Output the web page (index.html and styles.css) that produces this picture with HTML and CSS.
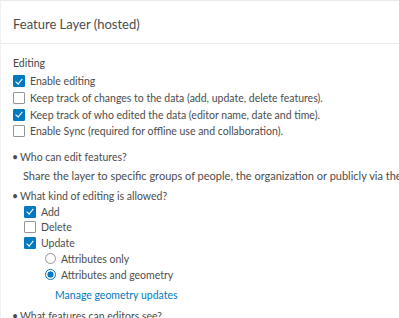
FILE: index.html
```html
<!DOCTYPE html>
<html lang="en">
<head>
    <meta charset="UTF-8">
    <meta name="viewport" content="width=device-width, initial-scale=1.0">
    <title>Feature Layer (hosted)</title>
    <link rel="stylesheet" href="styles.css">
</head>
<body>
    <div class="panel">
        <header class="panel-header">Feature Layer (hosted)</header>

        <section class="panel-body">
            <div class="group-title">Editing</div>
            <label class="check-row"><span class="box checked"></span>Enable editing</label>
            <label class="check-row"><span class="box"></span>Keep track of changes to the data (add, update, delete features).</label>
            <label class="check-row"><span class="box checked"></span>Keep track of who edited the data (editor name, date and time).</label>
            <label class="check-row"><span class="box"></span>Enable Sync (required for offline use and collaboration).</label>

            <div class="question first">Who can edit features?</div>
            <div class="note">Share the layer to specific groups of people, the organization or publicly via the Share button.</div>

            <div class="question">What kind of editing is allowed?</div>
            <div class="options">
                <label class="check-row small"><span class="box checked"></span>Add</label>
                <label class="check-row small"><span class="box"></span>Delete</label>
                <label class="check-row small"><span class="box checked"></span>Update</label>
                <div class="sub-options">
                    <label class="check-row small"><span class="radio"></span>Attributes only</label>
                    <label class="check-row small"><span class="radio selected"></span>Attributes and geometry</label>
                    <a class="link" href="#">Manage geometry updates</a>
                </div>
            </div>

            <div class="question last">What features can editors see?</div>
        </section>
    </div>
</body>
</html>
```

FILE: styles.css
```css
body {
    margin: 0;
    padding: 0;
    background-color: #fff;
    color: #4c4c4c;
    font-family: Lato, "Open Sans", sans-serif;
    overflow: hidden;
}

.panel {
    border-top: 1px solid #eaeaea;
    border-left: 1px solid #f0f0f0;
    height: 317px;
    overflow: hidden;
}

.panel-header {
    height: 39px;
    line-height: 40px;
    padding: 3px 0 0 12px;
    font-size: 13px;
    border-bottom: 1px solid #eaeaea;
    white-space: nowrap;
}

.panel-body {
    padding: 11px 0 0 12px;
    white-space: nowrap;
    font-size: 10.5px;
}

.group-title {
    height: 18px;
    line-height: 16px;
    color: #444;
}

.check-row {
    display: flex;
    align-items: center;
    height: 16.67px;
}

.check-row.small {
    height: 15.75px;
}

.box {
    width: 10px;
    height: 10px;
    border: 1px solid #959595;
    border-radius: 1px;
    margin-right: 5px;
    flex: none;
    position: relative;
}

.box.checked {
    background-color: #0079c1;
    border-color: #0079c1;
}

.box.checked::after {
    content: "";
    position: absolute;
    left: 3.3px;
    top: 0.6px;
    width: 2.5px;
    height: 6px;
    border: solid #fff;
    border-width: 0 1.7px 1.7px 0;
    transform: rotate(40deg);
}

.radio {
    width: 9px;
    height: 9px;
    border: 1px solid #959595;
    border-radius: 50%;
    margin-right: 5px;
    flex: none;
}

.radio.selected {
    border-color: #0079c1;
    background: radial-gradient(circle, #0079c1 0 2.8px, #fff 3.4px);
}

.question {
    height: 16px;
    line-height: 16px;
    margin-top: 6px;
}

.question.first {
    margin-top: 9px;
}

.question.last {
    margin-top: 5px;
}

.question::before {
    content: "\2022";
    display: inline-block;
    width: 8px;
    margin-left: -1px;
}

.note {
    padding: 1px 0 0 10px;
    height: 16px;
    line-height: 19px;
    font-size: 11px;
}

.options {
    padding-left: 11px;
}

.sub-options {
    padding-left: 21px;
}

.link {
    display: block;
    color: #0079c1;
    text-decoration: none;
    padding-left: 10px;
    margin-top: 5px;
    height: 16px;
    line-height: 16px;
}
```
